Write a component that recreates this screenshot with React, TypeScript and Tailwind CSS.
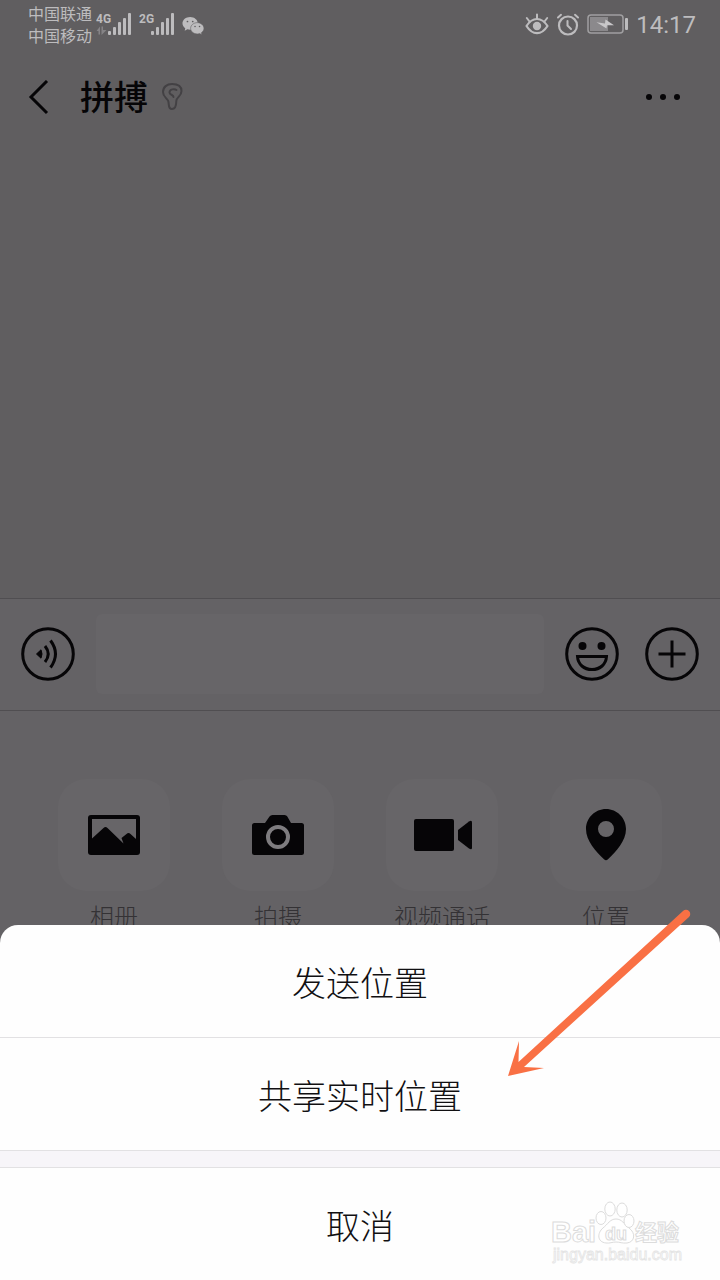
import type { ReactNode } from 'react'

/**
 * Chat screen with the "location" action sheet opened over it.
 */

const FONT = "font-['Roboto','Noto_Sans_CJK_SC',sans-serif]"

function SignalBars({ label, active }: { label: string; active?: boolean }) {
  return (
    <svg width="36" height="26" viewBox="0 0 36 26" fill="#bdbcbe" aria-hidden="true">
      <text x="0" y="10" fontFamily="Roboto, sans-serif" fontSize="12" fontWeight="700">
        {label}
      </text>
      {active && (
        <path d="M0.500 18 L4 13.500 V21.500 H2.500 V18 Z M5.500 13.500 H7 V17 H10.500 L5.500 22 Z" fill="#858386" />
      )}
      <rect x="12" y="18" width="3" height="4" rx="1" />
      <rect x="17" y="14" width="3" height="8" rx="1" />
      <rect x="22" y="9" width="3" height="13" rx="1" />
      <rect x="27" y="5" width="3" height="17" rx="1" />
      <rect x="32" y="0" width="3" height="22" rx="1" />
    </svg>
  )
}

function WeChatIcon() {
  return (
    <svg width="23" height="20" viewBox="0 0 24 20" aria-hidden="true">
      <path
        d="M8.500 0.500C4 0.500 0.500 3.400 0.500 7.200c0 2.100 1.100 3.900 2.900 5.100L2.800 15l2.800-1.500c.9.3 1.900.4 2.900.4 4.400 0 8-3 8-6.700S12.900.5 8.500.5z"
        fill="#bdbcbe"
      />
      <path
        d="M16 6.500c-3.800 0-7 2.600-7 5.900s3.200 5.900 7 5.900c.9 0 1.700-.1 2.500-.4l2.300 1.300-.6-2.200c1.700-1.100 2.700-2.700 2.700-4.600 0-3.300-3.100-5.900-6.900-5.900z"
        fill="#bdbcbe"
        stroke="#605e60"
        strokeWidth="0.600"
      />
      <circle cx="5.700" cy="5.300" r="0.900" fill="#605e60" />
      <circle cx="11.200" cy="5.300" r="0.900" fill="#605e60" />
      <circle cx="13.600" cy="10.500" r="0.800" fill="#605e60" />
      <circle cx="18.300" cy="10.500" r="0.800" fill="#605e60" />
    </svg>
  )
}

function EyeIcon() {
  return (
    <svg width="24" height="22" viewBox="0 0 24 22" fill="none" stroke="#bdbcbe" aria-hidden="true">
      <path d="M1.500 13 C5 7.500 8.500 6 12 6 S19 7.500 22.500 13 C19 18.500 15.500 20.200 12 20.200 S5 18.500 1.500 13 Z" strokeWidth="2.200" strokeLinejoin="round" />
      <circle cx="12" cy="13" r="4.200" fill="#bdbcbe" stroke="none" />
      <path d="M12 1.500 V6 M1.800 5 L4.500 8.500 M22.200 5 L19.500 8.500" strokeWidth="2" strokeLinecap="round" />
    </svg>
  )
}

function AlarmIcon() {
  return (
    <svg width="22" height="23" viewBox="0 0 22 23" fill="none" stroke="#bdbcbe" strokeLinecap="round" aria-hidden="true">
      <circle cx="11" cy="12.500" r="9" strokeWidth="2.200" />
      <path d="M10.500 8 V12.500 L14 16" strokeWidth="2" />
      <path d="M1 4.500 L4 1.800 M21 4.500 L18 1.800" strokeWidth="2" />
    </svg>
  )
}

function BatteryIcon() {
  return (
    <svg width="41" height="20" viewBox="0 0 41 20" aria-hidden="true">
      <rect x="1" y="1" width="35" height="18" rx="3" fill="none" stroke="#a09fa1" strokeWidth="1.500" />
      <rect x="3" y="3" width="18" height="14" fill="#8b898c" />
      <path d="M9.500 8.300 L18 9.500 L18.500 5.500 L27 11.200 L20 11.200 L19.500 14.500 Z" fill="#c8c7c9" />
      <rect x="38" y="4" width="3" height="12" rx="1" fill="#bdbcbe" />
    </svg>
  )
}

function StatusBar() {
  return (
    <div className="flex h-12 items-center justify-between pr-6 pl-7 text-[#bdbcbe]">
      <div className="flex items-center pt-1">
        <div className="text-[16px] leading-[22px]">
          <p>中国联通</p>
          <p>中国移动</p>
        </div>
        <div className="flex items-center gap-[7px] pl-1">
          <SignalBars label="4G" active />
          <SignalBars label="2G" />
          <WeChatIcon />
        </div>
      </div>
      <div className="flex items-center gap-2">
        <EyeIcon />
        <AlarmIcon />
        <BatteryIcon />
        <time className="pt-0.5 text-[24px] leading-8">14:17</time>
      </div>
    </div>
  )
}

function ChatHeader() {
  return (
    <header className="flex h-[100px] items-start justify-between px-7 pt-[25px]">
      <div className="flex items-center">
        <button type="button" aria-label="返回" className="flex h-12 w-[52px] items-center">
          <svg width="22" height="36" viewBox="0 0 22 36" fill="none" stroke="#060507" strokeWidth="3">
            <path d="M19 1 L3 17 L19 33" />
          </svg>
        </button>
        <h1 className="text-[34px] leading-[50px] font-medium text-[#060507]">拼搏</h1>
        <svg className="ml-[13px]" width="24" height="30" viewBox="0 0 24 30" fill="none" stroke="#434144" strokeWidth="2" strokeLinecap="round" strokeLinejoin="round" aria-hidden="true">
          <path d="M2 9 C2 4 6 1 11 1 C17 1 20.500 3.500 20.500 8 C20.500 13.500 15.500 14 15.300 18 C15.200 21 15.500 26 11 26 C6.500 26 8.500 21 7.200 18 C6 15 2 14 2 9 Z" />
          <path d="M15.500 7 C13.500 5.500 8.500 6 8.500 9.500 C8.500 12 12.500 11.500 12.500 14" />
        </svg>
      </div>
      <button type="button" aria-label="更多" className="flex h-12 items-center pr-3">
        <svg width="34" height="6" viewBox="0 0 34 6" fill="#060507">
          <circle cx="3" cy="3" r="3" />
          <circle cx="17" cy="3" r="3" />
          <circle cx="31" cy="3" r="3" />
        </svg>
      </button>
    </header>
  )
}

function RoundButton({ label, children }: { label: string; children: ReactNode }) {
  return (
    <button type="button" aria-label={label} className="shrink-0">
      <svg width="54" height="54" viewBox="0 0 54 54" fill="none" stroke="#060507" strokeWidth="3">
        <circle cx="27" cy="27" r="25.300" />
        {children}
      </svg>
    </button>
  )
}

function Composer() {
  return (
    <div className="flex items-center border-y border-[#504e51] bg-[#646265] px-[21px] pt-[15px] pb-4">
      <RoundButton label="语音">
        <path d="M15.500 27 L20 22.800 Q22 27 20 31.200 Z" fill="#060507" strokeWidth="1" />
        <path d="M24 19 Q30.500 27 24 35" />
        <path d="M29.500 13.500 Q39.500 27 29.500 40.500" />
      </RoundButton>
      <input
        type="text"
        aria-label="输入消息"
        className="mx-[21px] h-20 min-w-0 flex-1 rounded-md bg-[#676568] px-4 text-[32px] text-[#060507] outline-none"
      />
      <div className="flex gap-[26px]">
        <RoundButton label="表情">
          <circle cx="17.500" cy="19" r="4" fill="#060507" stroke="none" />
          <circle cx="36.500" cy="19" r="4" fill="#060507" stroke="none" />
          <path d="M12.500 29.500 H41.500 C41 37.500 35 42.500 27 42.500 S13 37.500 12.500 29.500 Z" />
        </RoundButton>
        <RoundButton label="更多功能">
          <path d="M27 13.500 V40.500 M13.500 27 H40.500" />
        </RoundButton>
      </div>
    </div>
  )
}

const tools: { label: string; icon: ReactNode }[] = [
  {
    label: '相册',
    icon: (
      <>
        <rect x="6" y="12" width="52" height="40" rx="3" fill="#060507" />
        <path d="M10 16 H54 V36 L48.500 31 Q46.500 29.200 44.500 31 L39.500 35 L41.500 40.500 L25.500 25 Q23.500 23.200 21.500 25 L10 35.500 Z" fill="#676568" />
      </>
    ),
  },
  {
    label: '拍摄',
    icon: (
      <>
        <path d="M8.500 20 H19 L23.500 13.500 Q24.500 12 26.500 12 H38.500 Q40.500 12 41.300 13.500 L45 20 H55.500 Q58 20 58 22.500 V49.500 Q58 52 55.500 52 H8.500 Q6 52 6 49.500 V22.500 Q6 20 8.500 20 Z" fill="#060507" />
        <circle cx="32" cy="34" r="10" fill="none" stroke="#7e7c7f" strokeWidth="4" />
      </>
    ),
  },
  {
    label: '视频通话',
    icon: (
      <>
        <rect x="4" y="16" width="40" height="32" rx="2" fill="#060507" />
        <path d="M48 27 L59 18.400 Q62 16.500 62 19.500 V44.500 Q62 47.500 59 45.600 L48 37 Z" fill="#060507" />
      </>
    ),
  },
  {
    label: '位置',
    icon: (
      <path
        fillRule="evenodd"
        d="M32 6 C43 6 52 15 52 26 C52 38 42 48.500 34 56.300 Q32 58 30 56.300 C22 48.500 12 38 12 26 C12 15 21 6 32 6 Z M32 18 A8 8 0 1 0 32 34 A8 8 0 1 0 32 18 Z"
        fill="#060507"
      />
    ),
  },
]

function ToolPanel() {
  return (
    <div className="min-h-[569px] bg-[#646265] px-8 pt-[68px]">
      <div className="grid grid-cols-4">
        {tools.map((tool) => (
          <button key={tool.label} type="button" className="flex flex-col items-center gap-2">
            <span className="flex size-28 items-center justify-center rounded-[28px] bg-[#676568]">
              <svg width="64" height="64" viewBox="0 0 64 64" aria-hidden="true">
                {tool.icon}
              </svg>
            </span>
            <span className="text-[24px] leading-[38px] font-light text-[#343235]">{tool.label}</span>
          </button>
        ))}
      </div>
    </div>
  )
}

function Watermark() {
  return (
    <svg
      className="pointer-events-none absolute right-9 bottom-3"
      width="134"
      height="70"
      viewBox="0 0 134 70"
      fill="#ffffff"
      stroke="#dcdcdc"
      strokeWidth="1"
      fontFamily="'Liberation Sans', 'Noto Sans CJK SC', sans-serif"
      fontWeight="700"
      aria-hidden="true"
    >
      <text x="1" y="44" fontSize="29">Bai</text>
      <path d="M66 21 C72 21 74 26 79 30 C86 35 85 44 77 45 C72 45.500 70 44 66 44 S60 45.500 56 45 C47 44 47 35 53 30 C58 26 60 21 66 21 Z" />
      <ellipse cx="51" cy="20" rx="5" ry="6.500" />
      <ellipse cx="60" cy="11" rx="5.200" ry="7" />
      <ellipse cx="72" cy="12" rx="5.200" ry="7" />
      <ellipse cx="79" cy="23" rx="5" ry="6.500" />
      <text x="55" y="42" fontSize="18">du</text>
      <text x="85" y="42" fontSize="22" fontFamily="'Noto Sans CJK SC', sans-serif">经验</text>
      <text x="3" y="62" fontSize="16" fontWeight="400" stroke="#e4e4e4" strokeWidth="0.800">jingyan.baidu.com</text>
    </svg>
  )
}

function ActionSheet() {
  return (
    <div
      role="dialog"
      aria-label="位置"
      className="absolute inset-x-0 bottom-0 overflow-hidden rounded-t-[18px] bg-[#fefefe] text-[34px] font-light text-[#111012]"
    >
      <button type="button" className="block h-28 w-full pt-1.5">发送位置</button>
      <button type="button" className="block h-[113px] w-full border-t border-[#e2e1e3] pt-1.5">共享实时位置</button>
      <div className="h-[18px] border-y border-[#e2e1e3] bg-[#f7f5f9]" />
      <button type="button" className="block h-28 w-full pt-1.5">取消</button>
      <Watermark />
    </div>
  )
}

function PointerArrow() {
  return (
    <svg
      className="pointer-events-none absolute right-7 bottom-[200px]"
      width="190"
      height="174"
      viewBox="0 0 190 174"
      fill="#f97044"
      aria-hidden="true"
    >
      <path d="M181 5 A4 4 0 0 1 187 11 L22 161 L42 162 L6 170 L17 135 L16.500 156 Z" />
    </svg>
  )
}

export default function App() {
  return (
    <div className={`relative flex min-h-screen flex-col overflow-hidden bg-[#605e60] ${FONT}`}>
      <StatusBar />
      <ChatHeader />
      <main className="flex-1" />
      <Composer />
      <ToolPanel />
      <ActionSheet />
      <PointerArrow />
    </div>
  )
}
